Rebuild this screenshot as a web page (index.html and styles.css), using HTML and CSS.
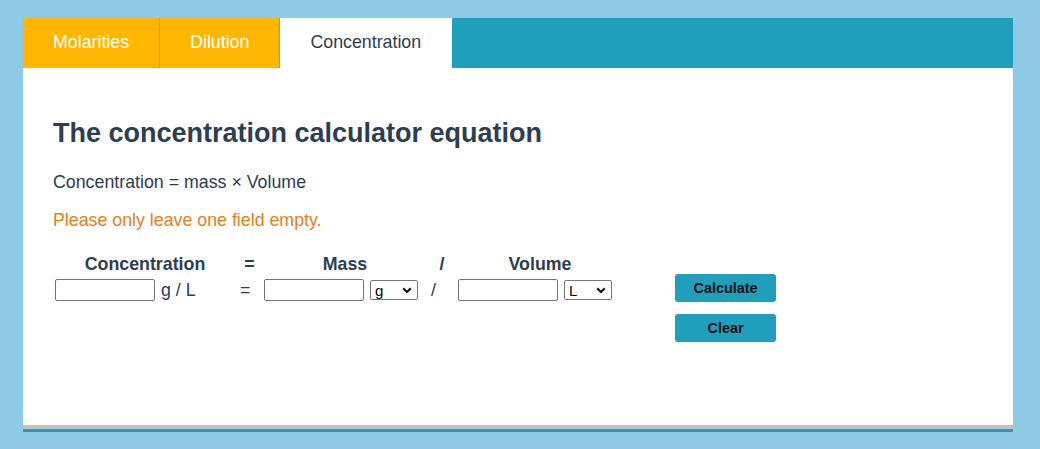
FILE: index.html
```html
<!DOCTYPE html>
<html lang="en">
<head>
<meta charset="utf-8">
<title>Concentration calculator</title>
<link rel="stylesheet" href="styles.css">
</head>
<body>
<div class="card">
  <nav class="tabs">
    <div class="tab">Molarities</div>
    <div class="tab">Dilution</div>
    <div class="tab active">Concentration</div>
  </nav>
  <main class="content">
    <h1 class="title">The concentration calculator equation</h1>
    <p class="formula">Concentration = mass × Volume</p>
    <p class="warning">Please only leave one field empty.</p>
    <div class="calc">
      <div class="grid">
        <div class="th">Concentration</div>
        <div class="th">=</div>
        <div class="th">Mass</div>
        <div class="th">/</div>
        <div class="th">Volume</div>

        <div class="td"><input class="field" type="text"><span class="unit">g / L</span></div>
        <div class="td op">=</div>
        <div class="td"><input class="field" type="text"><span class="selwrap"><select class="sel"><option>g</option><option>mg</option><option>kg</option></select><svg class="chev" width="10" height="7" viewBox="0 0 10 7"><path d="M1.2 1.3 L5 5 L8.8 1.3" fill="none" stroke="#111" stroke-width="2.2"/></svg></span></div>
        <div class="td op">/</div>
        <div class="td"><input class="field" type="text"><span class="selwrap"><select class="sel"><option>L</option><option>mL</option></select><svg class="chev" width="10" height="7" viewBox="0 0 10 7"><path d="M1.2 1.3 L5 5 L8.8 1.3" fill="none" stroke="#111" stroke-width="2.2"/></svg></span></div>
      </div>
      <div class="buttons">
        <button class="btn" type="button">Calculate</button>
        <button class="btn" type="button">Clear</button>
      </div>
    </div>
  </main>
</div>
</body>
</html>
```
FILE: styles.css
```css
html, body {
  margin: 0;
  padding: 0;
}
body {
  background: #8ecae6;
  font-family: "Liberation Sans", Arial, sans-serif;
  font-size: 17.8px;
  color: #2c3e50;
}
.card {
  width: 990px;
  margin: 18px 0 0 23px;
  border-bottom: 3px solid #219ebc;
}
.tabs {
  display: flex;
  height: 50px;
  background: #219ebc;
}
.tab {
  padding: 0 30px;
  line-height: 48px;
  background: #ffb703;
  color: #ffffff;
  border-right: 1px solid #fb8500;
}
.tab.active {
  padding: 0 31px 0 30px;
  background: #ffffff;
  color: #2c3e50;
  border-right: none;
}
.content {
  box-sizing: border-box;
  height: 361px;
  background: #ffffff;
  border-bottom: 4px solid #bdc3c7;
  padding: 50px 30px 0 30px;
}
.title {
  margin: 0;
  font-size: 27px;
  font-weight: bold;
  line-height: 31px;
  color: #2c3e50;
}
.formula {
  margin: 23px 0 0 0;
  line-height: 20px;
}
.warning {
  margin: 18px 0 0 0;
  line-height: 20px;
  color: #e67e22;
}
.calc {
  display: flex;
  align-items: flex-start;
  gap: 51px;
  margin-top: 24px;
}
.grid {
  display: grid;
  grid-template-columns: 184px 25px 166px 28px 168px;
}
.th {
  text-align: center;
  font-weight: bold;
  line-height: 20px;
}
.td {
  display: flex;
  align-items: center;
  gap: 6px;
  padding: 5px 0 0 2px;
  line-height: 20px;
}
.td.op {
  padding-left: 3px;
}
.field {
  box-sizing: border-box;
  width: 100px;
  height: 22px;
  margin: 0;
  padding: 1px 3px;
  border: 1px solid #767676;
  border-radius: 2px;
  font-family: "Liberation Sans", Arial, sans-serif;
  font-size: 14px;
  background: #ffffff;
}
.unit {
  color: #2c3e50;
}
.selwrap {
  position: relative;
  display: inline-flex;
}
.sel {
  appearance: none;
  -webkit-appearance: none;
  box-sizing: border-box;
  width: 48px;
  height: 20px;
  margin: 0;
  padding: 0 0 0 4px;
  border: 1px solid #767676;
  border-radius: 2px;
  background: #ffffff;
  font-family: "Liberation Sans", Arial, sans-serif;
  font-size: 15px;
  color: #000000;
}
.chev {
  position: absolute;
  right: 6px;
  top: 7px;
  pointer-events: none;
}
.buttons {
  display: flex;
  flex-direction: column;
  gap: 12px;
  margin-top: 20px;
}
.btn {
  box-sizing: border-box;
  width: 101px;
  height: 28px;
  border: none;
  border-radius: 3px;
  background: #219ebc;
  color: #111111;
  font-family: "Liberation Sans", Arial, sans-serif;
  font-size: 14.4px;
  font-weight: bold;
  padding: 0;
}
```
